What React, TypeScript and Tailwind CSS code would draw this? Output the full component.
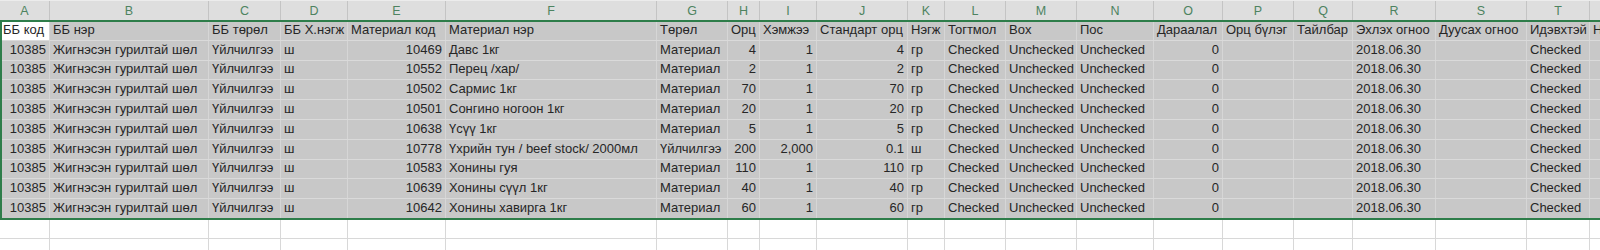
import React from "react";

const cols = [
  { l: "A", w: 50 },
  { l: "B", w: 159 },
  { l: "C", w: 72 },
  { l: "D", w: 67 },
  { l: "E", w: 98 },
  { l: "F", w: 211 },
  { l: "G", w: 71 },
  { l: "H", w: 32 },
  { l: "I", w: 57 },
  { l: "J", w: 91 },
  { l: "K", w: 37 },
  { l: "L", w: 61 },
  { l: "M", w: 71 },
  { l: "N", w: 77 },
  { l: "O", w: 69 },
  { l: "P", w: 71 },
  { l: "Q", w: 59 },
  { l: "R", w: 83 },
  { l: "S", w: 91 },
  { l: "T", w: 63 },
  { l: "U", w: 80 },
];

const header = [
  "ББ код",
  "ББ нэр",
  "ББ төрөл",
  "ББ Х.нэгж",
  "Материал код",
  "Материал нэр",
  "Төрөл",
  "Орц",
  "Хэмжээ",
  "Стандарт орц",
  "Нэгж",
  "Тогтмол",
  "Box",
  "Пос",
  "Дараалал",
  "Орц бүлэг",
  "Тайлбар",
  "Эхлэх огноо",
  "Дуусах огноо",
  "Идэвхтэй",
  "Нэмэлт",
];

const rightCols = new Set([0, 4, 7, 8, 9, 14]);

const items: [string, string, string, string, string, string][] = [
  ["10469", "Давс 1кг", "Материал", "4", "1", "4"],
  ["10552", "Перец /хар/", "Материал", "2", "1", "2"],
  ["10502", "Сармис 1кг", "Материал", "70", "1", "70"],
  ["10501", "Сонгино ногоон 1кг", "Материал", "20", "1", "20"],
  ["10638", "Үсүү 1кг", "Материал", "5", "1", "5"],
  ["10778", "Үхрийн тун / beef stock/ 2000мл", "Үйлчилгээ", "200", "2,000", "0.1"],
  ["10583", "Хонины гуя", "Материал", "110", "1", "110"],
  ["10639", "Хонины сүүл 1кг", "Материал", "40", "1", "40"],
  ["10642", "Хонины хавирга 1кг", "Материал", "60", "1", "60"],
];

const rows: string[][] = items.map((it) => [
  "10385",
  "Жигнэсэн гурилтай шөл",
  "Үйлчилгээ",
  "ш",
  it[0],
  it[1],
  it[2],
  it[3],
  it[4],
  it[5],
  it[2] === "Үйлчилгээ" ? "ш" : "гр",
  "Checked",
  "Unchecked",
  "Unchecked",
  "0",
  "",
  "",
  "2018.06.30",
  "",
  "Checked",
  "",
]);

const heights = ["h-[20px]", "h-[20px]", "h-[19px]", "h-[20px]", "h-[20px]", "h-[20px]", "h-[20px]", "h-[19px]", "h-[20px]", "h-[20px]"];

export default function App() {
  return (
    <div
      className="relative w-[1600px] h-[250px] overflow-hidden bg-white text-[13px] text-[#262626]"
      style={{ fontFamily: '"Liberation Sans", Arial, sans-serif' }}
    >
      <div className="flex h-[21px] border-t border-[#ececec] bg-[#dedede]">
        {cols.map((c) => (
          <div
            key={c.l}
            style={{ width: c.w }}
            className="shrink-0 flex items-center justify-center border-r border-[#c4c4c4] text-[12.5px] text-[#4d8360]"
          >
            {c.l}
          </div>
        ))}
      </div>
      {[header, ...rows].map((r, ri) => (
        <div key={ri} className={`flex ${heights[ri]} border-b border-[#dadada] bg-[#c8c8c8]`}>
          {cols.map((c, ci) => {
            const active = ri === 0 && ci === 0;
            const right = ri > 0 && rightCols.has(ci);
            return (
              <div
                key={c.l}
                style={{ width: c.w }}
                className={`shrink-0 flex items-end pb-[1px] border-r border-[#d6d6d6] whitespace-nowrap overflow-hidden ${
                  active ? "bg-white" : ""
                } ${right ? "justify-end pr-[3px]" : "pl-[3px]"}`}
              >
                {r[ci]}
              </div>
            );
          })}
        </div>
      ))}
      {[0, 1].map((i) => (
        <div key={i} className="flex h-[20px] border-b border-[#d8d8d8] bg-white">
          {cols.map((c) => (
            <div key={c.l} style={{ width: c.w }} className="shrink-0 border-r border-[#d8d8d8]" />
          ))}
        </div>
      ))}
      <div className="pointer-events-none absolute left-0 top-[20px] h-[200px] w-[1610px] border-2 border-[#2e7d4a]" />
    </div>
  );
}
